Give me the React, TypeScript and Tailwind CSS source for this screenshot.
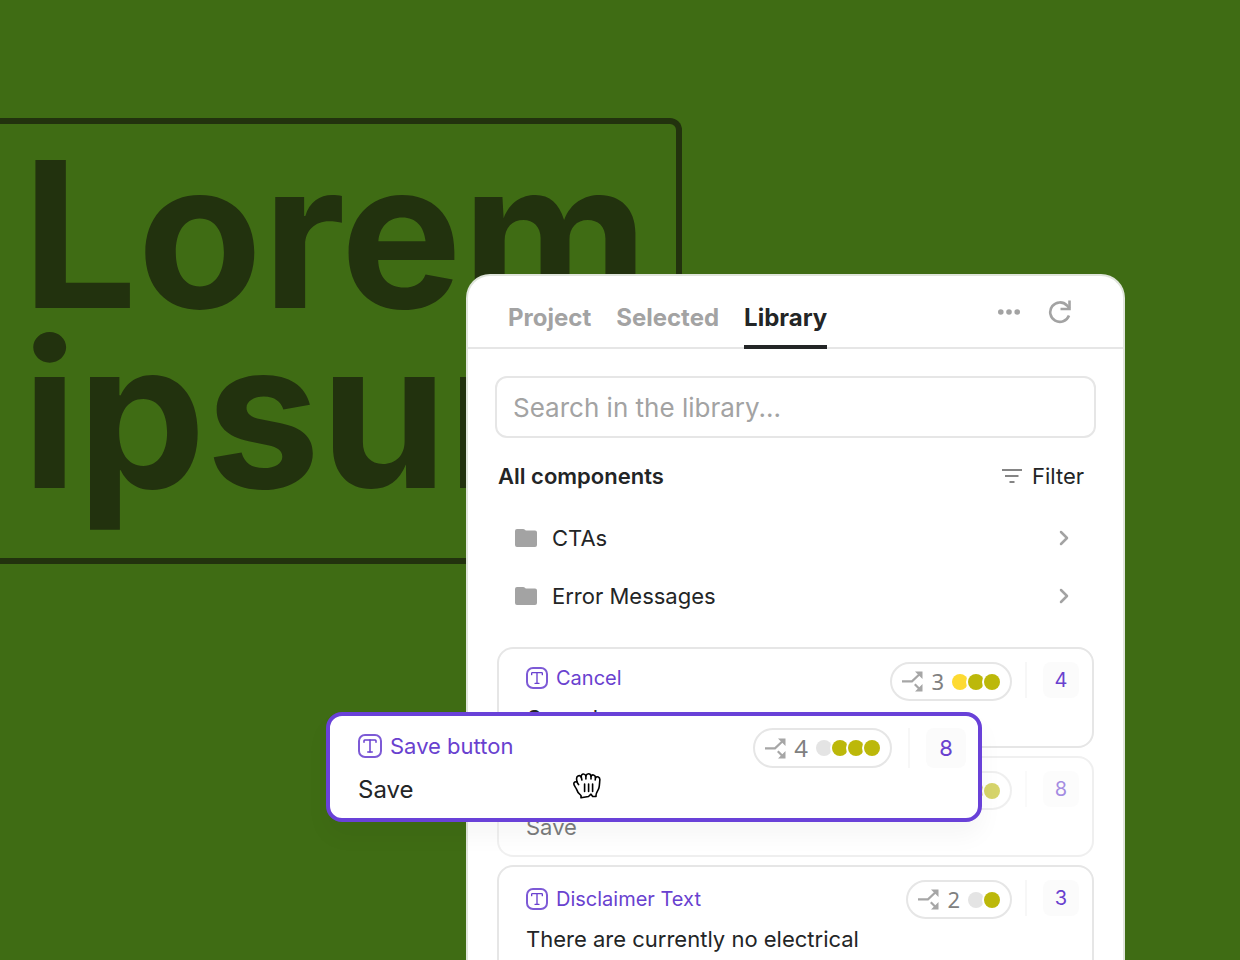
import { useState } from 'react';
import clsx from 'clsx';
import { ChevronRight, Type } from 'lucide-react';

const tabs = ['Project', 'Selected', 'Library'];

const folders = ['CTAs', 'Error Messages'];

const dotColors = {
  gray: 'bg-[#e4e4e4]',
  yellow: 'bg-[#fdda32]',
  olive: 'bg-[#bcb80a]',
};

type Dot = keyof typeof dotColors;

interface Component {
  name: string;
  text: string;
  dots: Dot[];
  count: number;
  dragged?: boolean;
  long?: boolean;
}

const components: Component[] = [
  { name: 'Cancel', text: 'Cancel', dots: ['yellow', 'olive', 'olive'], count: 4 },
  { name: 'Save button', text: 'Save', dots: ['gray', 'olive', 'olive', 'olive'], count: 8, dragged: true },
  { name: 'Disclaimer Text', text: 'There are currently no electrical', dots: ['gray', 'olive'], count: 3, long: true },
];

function FolderIcon() {
  return (
    <svg width="22" height="18" viewBox="0 0 22 18" fill="#a3a3a3" aria-hidden="true">
      <path d="M2 0h6.2c.6 0 1 .2 1.4.6L10.8 1.5H20a2 2 0 0 1 2 2V16a2 2 0 0 1-2 2H2a2 2 0 0 1-2-2V2a2 2 0 0 1 2-2Z" />
    </svg>
  );
}

function RefreshIcon() {
  return (
    <svg width="24" height="24" viewBox="0 0 24 24" fill="none" stroke="#a3a3a3" strokeWidth="2.6" aria-hidden="true">
      <path d="M21 15.5A9.7 9.700 0 1 1 19 5.500L21.500 8.500" />
      <path d="M21.500 0.500v8.500H12.500" />
    </svg>
  );
}

function BranchIcon() {
  return (
    <svg width="21" height="21" viewBox="0 0 21 21" fill="none" stroke="#a6a6a6" strokeWidth="2.2" aria-hidden="true">
      <path d="M0 10.3h10L18 2.7" />
      <path d="M12.8 13.3l5 5" />
      <path d="M13 .5h7.5V8ZM20.5 13v7.5H13Z" fill="#a6a6a6" stroke="none" />
    </svg>
  );
}

function GrabCursor() {
  return (
    <svg width="28" height="26" viewBox="0 0 28 26" fill="white" stroke="black" strokeWidth="1.6" strokeLinecap="round" strokeLinejoin="round" aria-hidden="true">
      <path d="M8 24.8v-2.3C5.5 20.5 4 18.5 3.3 15.8 2.5 14 .8 12.5.8 10.8c0-1.7 1.6-2.4 3.3-1.9C3.4 6.5 3.3 3.8 5 3c1.3-.6 2.7.1 3.3 1.3C8 2.2 9 1 10.4 1c1.3 0 2.1.8 2.5 2C13.3 1.6 14.2.8 15.5.8s2.3.9 2.5 2.5c.5-1.1 1.5-1.6 2.6-1.3 1.3.3 1.9 1.4 1.9 2.7.7-.9 1.8-1.2 2.8-.8 1.5.6 1.7 2.1 1.5 3.6-.3 2.5-.2 5-.9 7.5-.7 2.6-2.9 4.5-2.9 7.5v1h-3.3l-1.700-2.300-2.500 2.300Z" />
      <path d="M4.1 8.900c.4 1.100.9 2 1.500 2.700M8.300 4.300l.6 2.700M12.900 3v3M18 3.300V6M22.500 4.700l-.3 2.300" />
      <path d="M11.600 11v7.500M15.600 11v7.500M19.600 11v7.500" />
    </svg>
  );
}

function TextBadge({ large }: { large?: boolean }) {
  return (
    <span className={clsx('flex items-center justify-center rounded-[7px] border-2 border-[#7d5ad6]', large ? 'size-6' : 'size-[22px]')}>
      <Type className={large ? 'size-[18px]' : 'size-4'} strokeWidth={2} />
    </span>
  );
}

function Variants({ dots, large }: { dots: Dot[]; large?: boolean }) {
  return (
    <div className={clsx('flex items-center rounded-full border-2 border-[#e6e6e6] bg-white px-[10px]', large ? 'h-10' : 'h-[39px]')}>
      <BranchIcon />
      <span className={clsx("ml-2 font-['Noto_Sans',sans-serif] text-[#808080]", large ? 'text-2xl' : 'text-[22px]')}>{dots.length}</span>
      {/* reversed so that each dot covers the one to its right */}
      <span className="ml-2 flex flex-row-reverse">
        {[...dots].reverse().map((dot, i) => (
          <span key={i} className={clsx('size-4 rounded-full ring-2 ring-white', dotColors[dot])} />
        ))}
      </span>
    </div>
  );
}

function ComponentCard({ item }: { item: Component }) {
  return (
    <article
      className={clsx(
        'flex items-start justify-between rounded-2xl border-2 border-[#e6e6e6] pr-[13px] pl-[27px]',
        item.long ? 'min-h-[130px]' : 'min-h-[101px]',
        item.dragged && 'opacity-60'
      )}
    >
      <div className={item.long ? 'pt-5' : 'pt-[17px]'}>
        <h3 className="flex items-center gap-2 text-xl/6 text-[#6941cf]">
          <TextBadge />
          {item.name}
        </h3>
        <p className="mt-[14px] text-[22px]/7 whitespace-nowrap">{item.text}</p>
      </div>
      <div className="flex pt-[13px]">
        <Variants dots={item.dots} />
        <div className="ml-[13px] h-9 w-[2px] bg-[#f7f7f7]" />
        <span className="ml-4 flex size-9 items-center justify-center rounded-lg bg-[#fbfbfb] text-xl text-[#6941cf]">
          {item.count}
        </span>
      </div>
    </article>
  );
}

export default function App() {
  const [activeTab, setActiveTab] = useState('Library');
  const [search, setSearch] = useState('');

  return (
    <main className="relative flex h-screen overflow-hidden bg-[#3f6c14] pt-[274px] pr-[115px] pl-[466px] font-['Inter',sans-serif] text-[#232526]">
      {/* Canvas layer under the plugin window */}
      <div className="absolute top-[118px] left-0 h-[446px] w-[682px] rounded-r-xl border-6 border-l-0 border-[#22320e] pt-5 pl-[22px] text-[204px]/[180px] font-bold text-[#22320e]">
        Lorem
        <br />
        ipsum
      </div>

      {/* Plugin window */}
      <section className="relative flex-1 rounded-t-3xl border-2 border-b-0 border-[#e0e5dc] bg-white">
        <header className="flex h-[73px] items-end justify-between border-b-2 border-[#e6e6e6] pr-[51px] pl-10">
          <nav className="-mb-[2px] flex gap-[25px]">
            {tabs.map(tab => (
              <button
                key={tab}
                onClick={() => setActiveTab(tab)}
                className={clsx(
                  'border-b-4 pb-[11px] text-2xl/8 font-bold',
                  tab === activeTab ? 'border-[#232526]' : 'border-transparent text-[#a3a3a3]'
                )}
              >
                {tab}
              </button>
            ))}
          </nav>
          <div className="mb-[23px] flex items-center gap-7">
            <button aria-label="More">
              <svg width="22" height="6" viewBox="0 0 22 6" fill="#a3a3a3">
                <circle cx="2.8" cy="3" r="2.8" />
                <circle cx="11" cy="3" r="2.8" />
                <circle cx="19.2" cy="3" r="2.8" />
              </svg>
            </button>
            <button aria-label="Refresh">
              <RefreshIcon />
            </button>
          </div>
        </header>

        <div className="px-[27px] pt-[27px]">
          <input
            type="text"
            aria-label="Search in the library"
            placeholder="Search in the library..."
            value={search}
            onChange={e => setSearch(e.target.value)}
            className="h-[62px] w-full rounded-xl border-2 border-[#e6e6e6] px-4 text-[26px] placeholder:text-[#a3a3a3]"
          />
        </div>

        <div className="mt-[22px] flex h-8 items-center justify-between pr-[39px] pl-[30px]">
          <h2 className="text-[22px] font-semibold">All components</h2>
          <button className="flex items-center gap-[10px] text-[22px]">
            <svg width="20" height="14" viewBox="0 0 20 14" stroke="#858585" strokeWidth="2" aria-hidden="true">
              <path d="M0 1h20M3 7h13.5M7.500 13h5" />
            </svg>
            Filter
          </button>
        </div>

        <ul className="mt-[17px] pr-[51px] pl-[47px]">
          {folders.map(folder => (
            <li key={folder}>
              <button className="flex h-[58px] w-full items-center">
                <FolderIcon />
                <span className="ml-[15px] text-[22px]">{folder}</span>
                <ChevronRight className="-mr-1 ml-auto size-6 text-[#a3a3a3]" strokeWidth={2.5} />
              </button>
            </li>
          ))}
        </ul>

        <div className="mt-[22px] flex flex-col gap-2 px-[29px]">
          {components.map(item => (
            <ComponentCard key={item.name} item={item} />
          ))}
        </div>
      </section>

      {/* Card being dragged */}
      <article className="absolute top-[712px] left-[326px] flex h-[110px] w-[656px] items-start justify-between rounded-2xl border-4 border-[#6941d8] bg-white pr-3 pl-7 shadow-[0_14px_24px_rgba(0,0,0,0.04)]">
        <div className="pt-4">
          <h3 className="flex items-center gap-2 text-[22px]/7 text-[#6941cf]">
            <TextBadge large />
            Save button
          </h3>
          <p className="mt-[14px] text-2xl/8">Save</p>
        </div>
        <div className="flex pt-3">
          <Variants dots={['gray', 'olive', 'olive', 'olive']} large />
          <div className="ml-4 h-10 w-[2px] bg-[#f7f7f7]" />
          <span className="ml-4 flex size-10 items-center justify-center rounded-lg bg-[#fbfbfb] text-[22px] text-[#6941cf]">8</span>
        </div>
      </article>
      <div className="absolute top-[773px] left-[573px]">
        <GrabCursor />
      </div>
    </main>
  );
}
